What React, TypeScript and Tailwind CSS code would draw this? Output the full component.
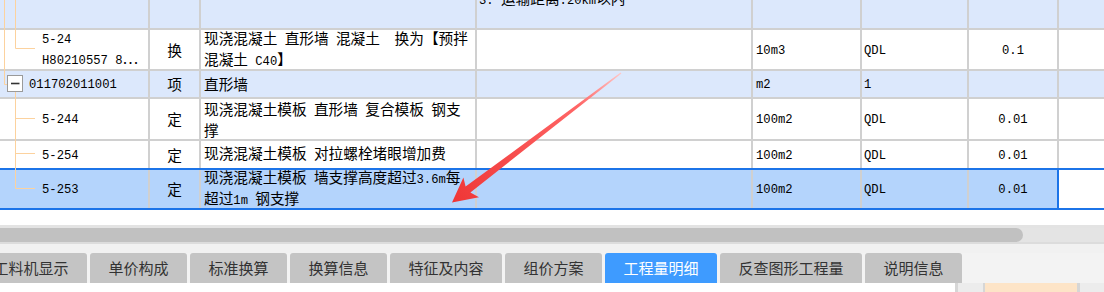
import React from "react";

function Txt({ s }: { s: string }) {
  const parts = s.match(/[\x20-\x7e]+|[^\x20-\x7e]+/g) || [];
  return (
    <>
      {parts.map((p, i) =>
        /[\x20-\x7e]/.test(p[0]) ? (
          <span key={i} className="font-['Liberation_Mono'] text-[12.2px] whitespace-pre">
            {p}
          </span>
        ) : (
          <span key={i} className="font-['Noto_Sans_CJK_SC'] text-[14.67px] whitespace-pre">
            {p}
          </span>
        )
      )}
    </>
  );
}

function Lines({ lines, className = "" }: { lines: string[]; className?: string }) {
  return (
    <div className={"leading-[17px] text-black " + className}>
      {lines.map((l, i) => (
        <div key={i} className="whitespace-pre">
          <Txt s={l} />
        </div>
      ))}
    </div>
  );
}

const cell = "shrink-0 h-full border-r-2 border-[#d0d0d0] flex items-center overflow-hidden";

type RowData = {
  code: string[];
  codePad: string;
  type: string;
  name: string[];
  unit: string;
  src: string;
  qty: string;
};

function DataRow({ d, rowCls, lastBorder = "border-[#d0d0d0]", lastBg = "" }: { d: RowData; rowCls: string; lastBorder?: string; lastBg?: string }) {
  return (
    <div className={"flex w-full " + rowCls}>
      <div className={cell + " w-[150px]"}>
        <Lines lines={d.code} className={d.codePad} />
      </div>
      <div className={cell + " w-[51px] justify-center"}>
        <Lines lines={[d.type]} />
      </div>
      <div className={cell + " w-[276px]"}>
        <Lines lines={d.name} className="pl-[3px]" />
      </div>
      <div className={cell + " w-[276px]"} />
      <div className={cell + " w-[109px]"}>
        <Lines lines={[d.unit]} className="pl-[3px]" />
      </div>
      <div className={cell + " w-[107px]"}>
        <Lines lines={[d.src]} className="pl-[2px]" />
      </div>
      <div className={"shrink-0 h-full border-r-2 flex items-center justify-center overflow-hidden w-[90px] " + lastBorder}>
        <Lines lines={[d.qty]} />
      </div>
      <div className={"flex-1 h-full " + lastBg} />
    </div>
  );
}

const tabs: { t: string; w: string; active?: boolean }[] = [
  { t: "工料机显示", w: "w-[112px]" },
  { t: "单价构成", w: "w-[97px]" },
  { t: "标准换算", w: "w-[97px]" },
  { t: "换算信息", w: "w-[97px]" },
  { t: "特征及内容", w: "w-[112px]" },
  { t: "组价方案", w: "w-[97px]" },
  { t: "工程量明细", w: "w-[112px]", active: true },
  { t: "反查图形工程量", w: "w-[142px]" },
  { t: "说明信息", w: "w-[97px]" },
];

export default function App() {
  return (
    <div className="w-[1104px] h-[292px] overflow-hidden bg-white flex flex-col">
      {/* grid */}
      <div className="relative w-full h-[210px] shrink-0">
        {/* row 0 (partially visible) */}
        <div className="flex w-full h-[30px] border-b-2 border-[#d0d0d0] bg-[#dce8fc]">
          <div className={cell + " w-[150px]"} />
          <div className={cell + " w-[51px]"} />
          <div className={cell + " w-[276px]"} />
          <div className={"shrink-0 h-full border-r-2 border-[#d0d0d0] overflow-hidden w-[276px]"}>
            <Lines lines={["3. 运输距离:20km以内"]} className="-mt-[11px] pl-[2px]" />
          </div>
          <div className={cell + " w-[109px]"} />
          <div className={cell + " w-[107px]"} />
          <div className={cell + " w-[90px]"} />
          <div className="flex-1 h-full" />
        </div>

        <DataRow
          rowCls="h-[41px] border-b-2 border-[#d0d0d0] bg-white"
          d={{
            code: ["5-24", "H80210557 8…"],
            codePad: "pl-[42px]",
            type: "换",
            name: ["现浇混凝土 直形墙 混凝土  换为【预拌", "混凝土 C40】"],
            unit: "10m3",
            src: "QDL",
            qty: "0.1",
          }}
        />
        <DataRow
          rowCls="h-[28px] border-b-2 border-[#d0d0d0] bg-[#dce8fc]"
          d={{
            code: ["011702011001"],
            codePad: "pl-[29px]",
            type: "项",
            name: ["直形墙"],
            unit: "m2",
            src: "1",
            qty: "",
          }}
        />
        <DataRow
          rowCls="h-[42px] border-b-2 border-[#d0d0d0] bg-white"
          d={{
            code: ["5-244"],
            codePad: "pl-[42px]",
            type: "定",
            name: ["现浇混凝土模板 直形墙 复合模板 钢支", "撑"],
            unit: "100m2",
            src: "QDL",
            qty: "0.01",
          }}
        />
        <DataRow
          rowCls="h-[27px] bg-white"
          d={{
            code: ["5-254"],
            codePad: "pl-[42px]",
            type: "定",
            name: ["现浇混凝土模板 对拉螺栓堵眼增加费"],
            unit: "100m2",
            src: "QDL",
            qty: "0.01",
          }}
        />
        <DataRow
          rowCls="h-[42px] border-y-2 border-[#1c74e8] bg-[#b4d4fc]"
          lastBorder="border-[#1c74e8]"
          lastBg="bg-white"
          d={{
            code: ["5-253"],
            codePad: "pl-[42px]",
            type: "定",
            name: ["现浇混凝土模板 墙支撑高度超过3.6m每", "超过1m 钢支撑"],
            unit: "100m2",
            src: "QDL",
            qty: "0.01",
          }}
        />

        {/* tree lines */}
        <svg className="absolute left-0 top-0 pointer-events-none" width="40" height="210" viewBox="0 0 40 210">
          <g stroke="#fcd29e" strokeWidth="1" fill="none">
            <path d="M4.5 0 V84.5 H8" />
            <path d="M15.5 0 V48.5 H35" />
            <path d="M15.5 92 V188.5 H35" />
            <path d="M15.5 118.5 H35" />
            <path d="M15.5 153.5 H35" />
          </g>
          <rect x="7.5" y="75.5" width="15" height="16" fill="#ffffff" stroke="#9a9a9a" />
          <path d="M11 83.5 H19.5" stroke="#333" strokeWidth="1.6" />
        </svg>

        {/* red arrow annotation */}
        <svg className="absolute left-0 top-0 pointer-events-none" width="1104" height="210" viewBox="0 0 1104 210">
          <defs>
            <linearGradient id="ag" x1="621" y1="73" x2="452" y2="202" gradientUnits="userSpaceOnUse">
              <stop offset="0" stopColor="#ffc8c8" />
              <stop offset="0.25" stopColor="#f66" />
              <stop offset="1" stopColor="#ef3636" />
            </linearGradient>
          </defs>
          <polygon
            points="621.4,73.4 470.4,192.4 479,197.2 452,202.5 463.4,177.6 465.6,186.6 620.6,72.6"
            fill="url(#ag)"
          />
        </svg>
      </div>

      {/* white gap */}
      <div className="h-[15px] shrink-0 bg-white" />

      {/* scrollbar */}
      <div className="h-[19px] shrink-0 bg-[#e4e4e4] flex flex-col">
        <div className="h-[3px] bg-[#e3e3e3]" />
        <div className="h-[14px] flex">
          <div className="w-[1023px] h-full bg-[#c1c1c1] rounded-r-full" />
        </div>
        <div className="h-[2px] bg-[#dcdcdc]" />
      </div>

      <div className="h-[9px] shrink-0 bg-[#f1f1f1]" />

      {/* tabs */}
      <div className="h-[30px] shrink-0 bg-[#f3f3f3] flex">
        <div className="flex gap-[3px] -ml-[25px]">
          {tabs.map((t) => (
            <div
              key={t.t}
              className={
                "h-full shrink-0 rounded-t-[3px] flex items-center justify-center font-['Noto_Sans_CJK_SC'] text-[15px] " +
                t.w +
                (t.active ? " bg-[#3e9bff] text-white" : " bg-[#c4c4c4] text-[#333333]")
              }
            >
              {t.t}
            </div>
          ))}
        </div>
      </div>

      {/* bottom strip */}
      <div className="h-[9px] shrink-0 flex">
        <div className="w-[955px] bg-white" />
        <div className="w-[3px] bg-[#d6d6d6]" />
        <div className="w-[25px] bg-[#ececec]" />
        <div className="w-[2px] bg-[#d6d6d6]" />
        <div className="w-[92px] bg-[#fde4c7]" />
        <div className="w-[3px] bg-[#d6d6d6]" />
        <div className="flex-1 bg-[#ececec]" />
      </div>
    </div>
  );
}
